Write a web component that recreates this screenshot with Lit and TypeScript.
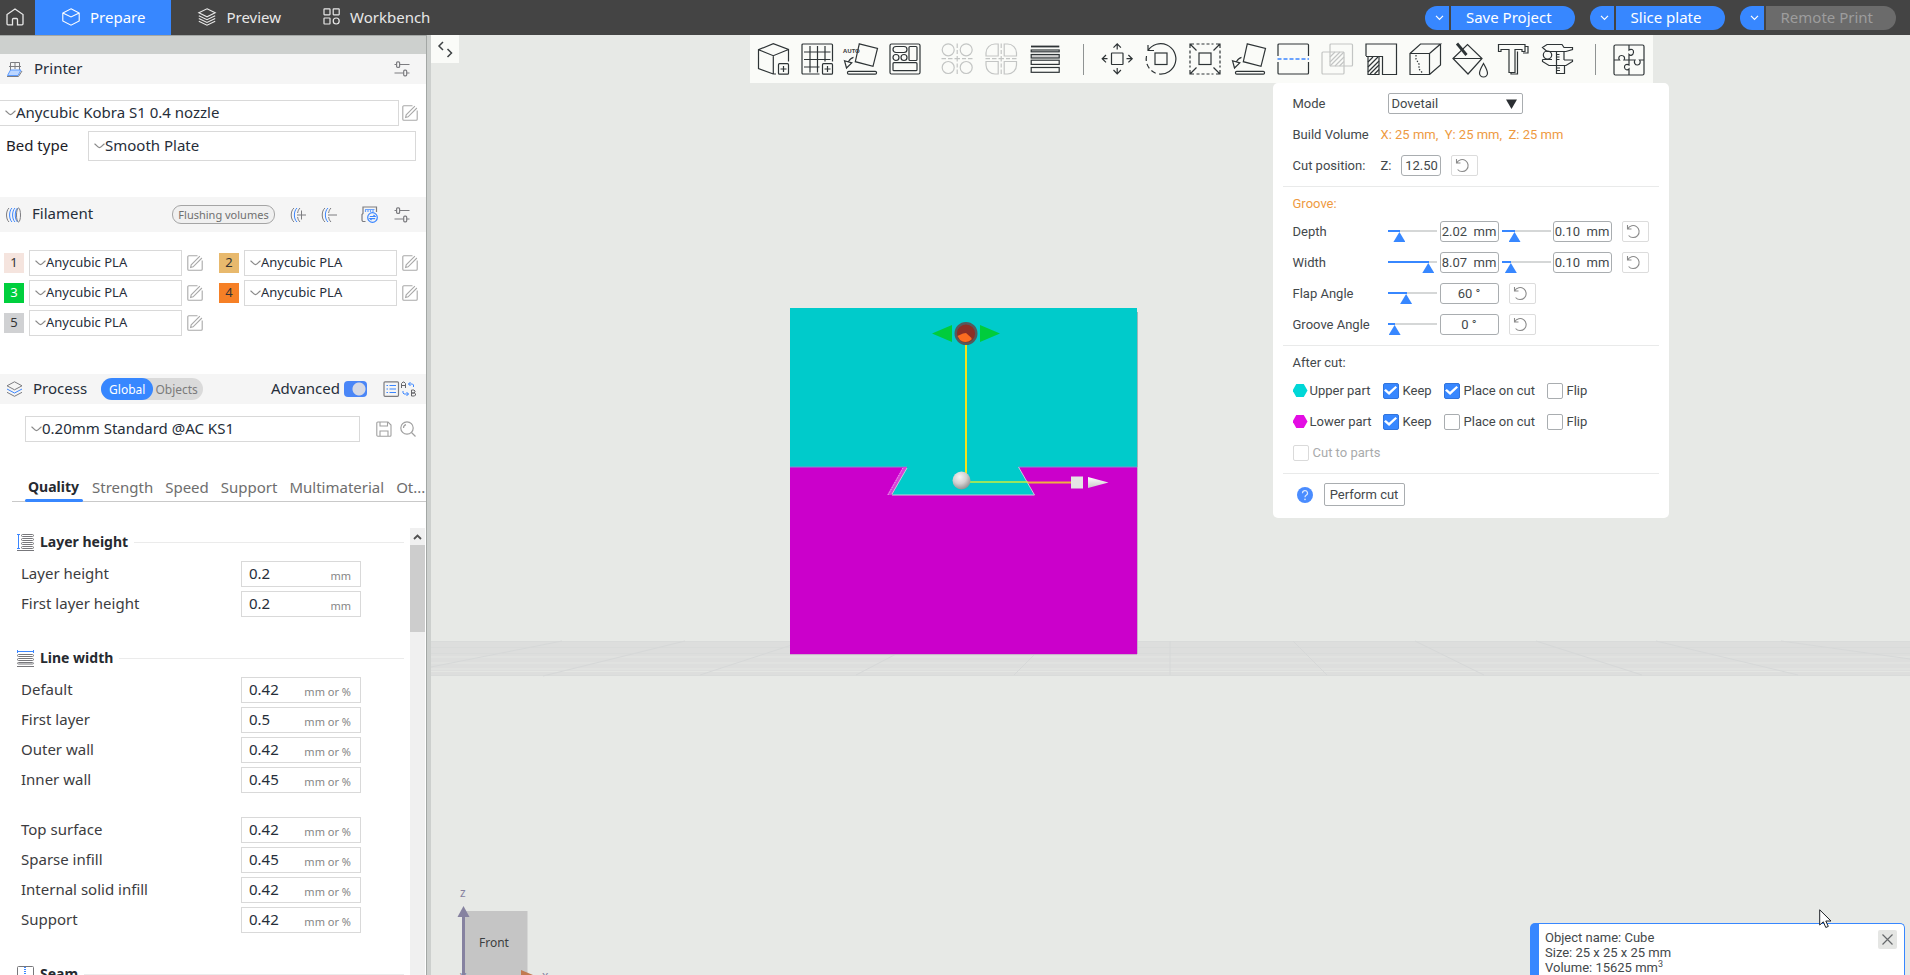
import { LitElement, html, svg, css, nothing, TemplateResult } from "lit";
import { customElement, property } from "lit/decorators.js";
import { classMap } from "lit/directives/class-map.js";
import { styleMap } from "lit/directives/style-map.js";

const CHEVRON = html`<svg class="chevron" width="11" height="6" viewBox="0 0 11 6" fill="none" stroke="#8a8a8a" stroke-width="1.2" aria-hidden="true"><path d="M.5 .8C2.6 2 3.4 4.6 5.5 4.6S8.4 2 10.500 .8" /></svg>`;

const EDIT = html`<svg width="16" height="16" viewBox="0 0 16 16" fill="none" stroke="#a9a9a9" stroke-width="1.1" aria-hidden="true">
  <path d="M10.500 .8H1.800a1 1 0 0 0-1 1V14.200a1 1 0 0 0 1 1H14.200a1 1 0 0 0 1-1V5.500" />
  <path d="M12.900 1.200 4.200 9.900l-.6 2.500 2.500-.6L14.900 3" />
</svg>`;

const SLIDERS = html`<svg width="16" height="16" viewBox="0 0 16 16" fill="none" stroke="#7c7c80" stroke-width="1.2" aria-hidden="true">
  <path d="M.5 3.500H2.500M5.500 3.500H15.500M.5 12H9.500M13 12H15.500" /><rect x="2.600" y=".8" width="3" height="5.600" rx="1" /><rect x="9.700" y="9.200" width="3" height="5.600" rx="1" />
</svg>`;

const RESET = html`<svg width="15" height="15" viewBox="0 0 15 15" fill="none" stroke="#8a8a8a" stroke-width="1.1" aria-hidden="true">
  <path d="M1.500 1v4h4M1.800 4.800A6 6 0 1 1 2.600 11.500" />
</svg>`;

const TOOL_ICONS: Record<string, TemplateResult> = {
  addCube: svg`<path d="M16.300 31 1.500 25.500V6.700L16.300 .7 31.500 6.500V18.500M1.500 6.700 16.300 12.700 31.500 6.500M16.300 12.700V31M16.300 31H19"/><rect x="21.500" y="20.700" width="10" height="10.500" rx="1"/><path d="M23.500 26H29.500M26.500 23V29"/>`,
  addPlate: svg`<path d="M18.500 31H2a1 1 0 0 1-1-1V2A1 1 0 0 1 2 1H30.500a1 1 0 0 1 1 1V18.500"/><path d="M9 3V29.500M16.500 3V29.500M24 3V18.500M3 9H29.500M3 16.500H29.500M3 24H18.500"/><rect x="21.500" y="20.700" width="10" height="10.500" rx="1"/><path d="M23.500 26H29.500M26.500 23V29"/>`,
  autoOrient: svg`<path d="M14.300 .8 32.500 5.500 28 23.300 10.300 18.700ZM-.5 17.700 6.800 19.900 1.500 25ZM8.500 14.300C6.500 14.800 4.500 16.500 3.600 18.600"/><rect x="2.500" y="28.300" width="29" height="2.800" rx="1.200"/><text x="-2" y="9.700" class="auto">AUTO</text>`,
  arrange: svg`<rect x="1" y="1" width="30" height="30" rx="1.500"/><rect x="4" y="3.500" width="14" height="6" rx="3"/><rect x="20" y="3.500" width="8" height="14" rx="1"/><circle cx="7" cy="14.500" r="3"/><circle cx="15" cy="14.500" r="3"/><rect x="4" y="19.700" width="24" height="8" rx="1"/>`,
  splitObjects: svg`<circle cx="7.200" cy="6.800" r="6"/><circle cx="25.200" cy="6.800" r="6"/><circle cx="7.200" cy="24.500" r="6"/><circle cx="25.200" cy="24.500" r="6"/><path d="M16.200 .5V5M16.200 7V11M16.200 13V18.500M16.200 20.500V24.500M16.200 26.500V31M.5 15.700H5M7 15.700H11.500M13.500 15.700H19M21 15.700H25M27 15.700H31.500"/>`,
  splitParts: svg`<path d="M13.200 1V13H1V10A9 9 0 0 1 10 1ZM19.200 1V13H31.500V10A9 9 0 0 0 22.500 1ZM13.200 31V18.500H1V22A9 9 0 0 0 10 31ZM19.200 31V18.500H31.500V22A9 9 0 0 1 22.500 31Z"/><path d="M16.200 .5V5M16.200 7V11M16.200 13V18.500M16.200 20.500V24.500M16.200 26.500V31M.5 15.700H5M7 15.700H11.500M13.500 15.700H19M21 15.700H25M27 15.700H31.500"/>`,
  layers: svg`<path d="M2 3.500H30.300" stroke-width="1.800"/><rect x="2.200" y="7" width="28" height="1.800"/><rect x="2.200" y="11.500" width="28" height="3.500" fill="#cfcfcf"/><rect x="2.200" y="17.200" width="28" height="4.200"/><rect x="2.200" y="24.500" width="28" height="4.800"/>`,
  move: svg`<rect x="10.500" y="10" width="11.500" height="11.500" rx=".5"/><path d="M16.200 1V6.500M12.500 4.700 16.200 .9 19.900 4.700M16.200 30.800V25M12.500 27 16.200 30.800 19.900 27M1.200 15.700H6.500M5 12 1.200 15.700 5 19.400M31.200 15.700H25.500M27.400 12 31.200 15.700 27.400 19.400"/>`,
  rotate: svg`<rect x="10" y="10" width="12" height="11.500"/><path d="M3 7.500A15.200 15.200 0 1 1 14 31M3 2V7.500H9"/><path d="M1.500 13A15.200 15.200 0 0 0 11.500 30.500" stroke-dasharray="5 3"/>`,
  scale: svg`<rect x="10" y="10" width="12" height="11.500"/><path d="M7.500 1H24.500M7.500 31H24.500M1 7.500V24.500M31 7.500V24.500" stroke-dasharray="3 2"/><path d="M1 5V1H5M27 1H31V5M31 27V31H27M5 31H1V27M1 1 7.500 7.500M31 1 24.500 7.500M31 31 24.500 24.500M1 31 7.500 24.500"/>`,
  layFace: svg`<path d="M14.300 .8 32.500 5.500 28 23.300 10.300 18.700ZM-.5 17.700 6.800 19.900 1.500 25ZM8.500 14.300C6.500 14.800 4.500 16.500 3.600 18.600"/><rect x="2.500" y="28.300" width="29" height="2.800" rx="1.200"/>`,
  cut: svg`<path d="M1 13V2A1 1 0 0 1 2 1H30.500A1 1 0 0 1 31.500 2V13M1 19V30A1 1 0 0 0 2 31H30.500A1 1 0 0 0 31.500 30V19"/><path d="M.5 16H32" stroke="#3b86ff" stroke-dasharray="4 2" stroke-width="1.400"/>`,
  boolean: svg`<rect x="1" y="9" width="22" height="22" rx="1"/><rect x="9" y="1" width="22.500" height="22" rx="1"/><path d="M9 14 14 9M9 19 19 9M9 23 23 9M14 23 23 14M18.500 23 23 18.500"/>`,
  support: svg`<path d="M1 13V1H31.500V31.500H17.500V13.500H1M3 14V31.500H14V14"/><path d="M3 19 8 14M3 24 13 14M3 29 14 18M5 31 14 22M9.500 31 14 26.500"/>`,
  seam: svg`<path d="M1 10.500H20.500V31.500H1ZM1 10.500 11.500 1H31.500L20.500 10.500M31.500 1V22L20.500 31.500"/><path d="M7 12V16L10 21V26L14 30.500" stroke-dasharray="1.500 1.500"/>`,
  paint: svg`<path d="M0 15.500 14.500 1.500 29 15.500 15 31ZM0 15.500H29"/><path d="M4 .5 13.500 12" stroke-width="2.800"/><path d="M30.500 20.500C28.500 24 26.500 27.500 26.500 30A4 4 0 0 0 34.500 30C34.500 27.500 32.500 24 30.500 20.500Z"/>`,
  text: svg`<path d="M1.500 1.500H28V8.500H25V6.500H18V29.500H12V6.500H4V8.500H1.500Z"/><path d="M28 3.500H31V10H26M20.500 8.500V31H14V29.500"/>`,
  measure: svg`<path d="M1.500 4.500 6 1.500H21L23 4.500H31.500V6.500L25 8.500H6ZM1.500 16.500V18.500L8 22.500H25L31.500 18.500V17H23M1.500 16.500H11M23 8.500V17M15.500 22.500V30.500H23.500V22.500M15.500 8.500V22"/><ellipse cx="6.500" cy="12" rx="4.200" ry="4"/><path d="M15.500 11.500H18.500M15.500 14H18.500M15.500 16.500H18.500M15.500 25H19M15.500 27.500H19"/>`,
  assembly: svg`<rect x="1" y="2" width="30" height="30" rx="1.500"/><path d="M16 2V7C18 5.500 21 6.500 20.500 9.500S17.500 13 16 11.500V17H11C12.500 14.500 11 12.500 8.500 12.500S5 15 6.500 17H1M16 17H22C20.500 19.500 22 22 24.500 22S28 19 26.500 17H31M16 17V22C13.500 20.500 11 22 11.500 24.500S14.500 27.500 16 26V32"/>`,
};

interface Tool { id: string; label: string; off?: boolean; gap?: boolean; sep?: boolean }

const TOOLS: Tool[] = [
  { id: "addCube", label: "Add" },
  { id: "addPlate", label: "Add plate" },
  { id: "autoOrient", label: "Auto orient" },
  { id: "arrange", label: "Arrange" },
  { id: "splitObjects", label: "Split to objects", off: true, gap: true },
  { id: "splitParts", label: "Split to parts", off: true },
  { id: "layers", label: "Variable layer height" },
  { id: "move", label: "Move", sep: true },
  { id: "rotate", label: "Rotate" },
  { id: "scale", label: "Scale" },
  { id: "layFace", label: "Lay on face" },
  { id: "cut", label: "Cut" },
  { id: "boolean", label: "Mesh boolean", off: true },
  { id: "support", label: "Support painting" },
  { id: "seam", label: "Seam painting" },
  { id: "paint", label: "Color painting" },
  { id: "text", label: "Text" },
  { id: "measure", label: "Measure" },
  { id: "assembly", label: "Assembly view", sep: true },
];

const sharedStyles = css`
  :host, * { box-sizing: border-box; }
  button, input, select { font: inherit; color: inherit; margin: 0; }
  button { background: none; border: 0; padding: 0; display: inline-flex; align-items: center; justify-content: center; }
  select { appearance: none; background: transparent; border: 0; padding: 0; min-width: 0; flex: 1; outline: 0; }
  svg { display: block; flex: none; overflow: visible; }
  input { outline: 0; min-width: 0; }
`;

@customElement("top-bar")
export class TopBar extends LitElement {
  static styles = [sharedStyles, css`
    :host { display: flex; align-items: stretch; height: 35px; background: #444444; color: #e8e8e8; font-size: 15px; }
    .home { width: 35px; padding: 0 6px 2px 0; }
    nav { display: flex; flex: 1; }
    .tab { gap: 10px; padding: 0 26px 2px 27px; }
    .tab:last-child { padding-left: 16px; }
    .tab.on { background: #3787ff; color: #fff; }
    .actions { display: flex; align-items: center; gap: 15px; padding-right: 14px; }
    .split { display: flex; gap: 2px; height: 24px; color: #fff; }
    .split button { background: #3787ff; }
    .drop { width: 24px; border-radius: 12px 0 0 12px; padding-left: 5px; }
    .main { border-radius: 0 12px 12px 0; padding: 0 23px 2px 15px; }
    .split .main.off { background: #6b6b6b; color: #9d9d9d; }
  `];

  private split(label: string, off = false) {
    return html`<div class="split">
      <button class="drop" aria-label="${label} options"><svg width="9" height="6" viewBox="0 0 9 6" fill="none" stroke="#fff" stroke-width="1.200"><path d="M1 .8 4.500 4.300 8 .8"/></svg></button>
      <button class=${classMap({ main: true, off })} ?disabled=${off}>${label}</button>
    </div>`;
  }

  render() {
    return html`
      <button class="home" aria-label="Home"><svg width="18" height="18" viewBox="0 0 18 18" fill="none" stroke="#e8e8e8" stroke-width="1.300"><path d="M6.500 16.800H2A1 1 0 0 1 1 15.800V6.500L9 1 17 6.500V15.800A1 1 0 0 1 16 16.800H11.500V11.500A1 1 0 0 0 10.500 10.500H7.500A1 1 0 0 0 6.500 11.500Z"/></svg></button>
      <nav>
        <button class="tab on"><svg width="18" height="18" viewBox="0 0 18 18" fill="none" stroke="#fff" stroke-width="1.100"><path d="M9 .8 17.200 5V13L9 17.200.8 13V5ZM.8 5 9 9 17.200 5"/></svg>Prepare</button>
        <button class="tab"><svg width="18" height="18" viewBox="0 0 18 18" fill="none" stroke="#e8e8e8" stroke-width="1.100"><path d="M9 .8 17.200 4.800 9 8.800.8 4.800ZM.8 7.700 9 11.700 17.200 7.700M.8 10.400 9 14.400 17.200 10.400M.8 13.200 9 17.200 17.200 13.200"/></svg>Preview</button>
        <button class="tab"><svg width="17" height="17" viewBox="0 0 17 17" fill="none" stroke="#e8e8e8" stroke-width="1.200"><rect x="1" y=".8" width="6" height="6" rx=".5"/><rect x="10.200" y=".8" width="6" height="6" rx=".5"/><rect x="1" y="10" width="6" height="6" rx=".5"/><circle cx="13.200" cy="13" r="3"/></svg>Workbench</button>
      </nav>
      <div class="actions">${this.split("Save Project")}${this.split("Slice plate")}${this.split("Remote Print", true)}</div>
    `;
  }
}

interface Filament { n: number; bg: string; fg: string }
const FILAMENTS: Filament[] = [
  { n: 1, bg: "#f5e4de", fg: "#333333" },
  { n: 2, bg: "#e8b96d", fg: "#333333" },
  { n: 3, bg: "#00cf3d", fg: "#ffffff" },
  { n: 4, bg: "#f68026", fg: "#333333" },
  { n: 5, bg: "#d0d1d3", fg: "#333333" },
];

interface Group { title: string; icon: TemplateResult; blocks: [string, string, string][][] }
const W = "mm or %";
const GROUPS: Group[] = [
  {
    title: "Layer height",
    icon: html`<svg width="17" height="17" viewBox="0 0 17 17" fill="none" stroke="#77777b"><path d="M1.500 1V14.500M0 .5H3M0 14.500H3" stroke="#3b86ff"/><rect x="4.500" y=".5" width="12" height="2" rx="1"/><rect x="4.500" y="4.500" width="12" height="2" rx="1"/><rect x="4.500" y="8.500" width="12" height="2" rx="1"/><rect x="4.500" y="12.500" width="12" height="2" rx="1"/><path d="M0 16.500H17"/></svg>`,
    blocks: [[["Layer height", "0.2", "mm"], ["First layer height", "0.2", "mm"]]],
  },
  {
    title: "Line width",
    icon: html`<svg width="17" height="17" viewBox="0 0 17 17" fill="none" stroke="#77777b"><path d="M.5 1.500H16.500M.5 0V3M16.500 0V3" stroke="#3b86ff"/><rect x=".5" y="4.500" width="16" height="2" rx="1"/><rect x=".5" y="8.500" width="16" height="2" rx="1"/><rect x=".5" y="12.500" width="16" height="1.500" rx="1"/><path d="M0 16.500H17"/></svg>`,
    blocks: [
      [["Default", "0.42", W], ["First layer", "0.5", W], ["Outer wall", "0.42", W], ["Inner wall", "0.45", W]],
      [["Top surface", "0.42", W], ["Sparse infill", "0.45", W], ["Internal solid infill", "0.42", W], ["Support", "0.42", W]],
    ],
  },
  {
    title: "Seam",
    icon: html`<svg width="17" height="17" viewBox="0 0 17 17" fill="none" stroke="#77777b"><rect x=".5" y=".5" width="16" height="16" rx="1"/><path d="M8 1V16" stroke="#3b86ff" stroke-width="2" stroke-dasharray="1 1"/></svg>`,
    blocks: [],
  },
];

@customElement("side-panel")
export class SidePanel extends LitElement {
  static styles = [sharedStyles, css`
    :host { display: flex; flex-direction: column; width: 431px; flex: none; min-height: 0; background: #fff; border-right: 4px solid #cdd0ce; font-size: 15px; color: #262e3a; position: relative; }
    :host::after { content: ""; position: absolute; top: 0; right: 0; bottom: 0; width: 1px; background: #a3a7a5; }
    .strip { height: 19px; background: #cdd0ce; border-top: 1px solid #a3a7a5; flex: none; }
    header { display: flex; align-items: center; background: #f5f5f5; height: 30px; padding: 0 17px 0 6px; flex: none; }
    header.tall { height: 35px; }
    header.process { padding-right: 10px; }
    header h2 { font: inherit; margin: 0 0 0 10px; padding-bottom: 3px; flex: 1; }
    .box { display: flex; align-items: center; border: 1px solid #d9d9d9; height: 26px; padding-left: 5px; background: #fff; }
    .box select { height: 24px; padding-bottom: 2px; }
    .printer { display: flex; align-items: center; gap: 3px; margin: 16px 9px 0 -1px; }
    .printer .box { flex: 1; }
    .bed { display: flex; align-items: center; margin: 5px 11px 36px 6px; }
    .bed label { width: 82px; color: #1c2027; padding-bottom: 2px; }
    .bed .box { flex: 1; height: 30px; }
    .flush { height: 19px; border: 1px solid #a5a5a5; border-radius: 9px; font-size: 11px; color: #6f6f6f; width: 103px; margin-right: 15px; background: #f0f0f0; }
    .fadd { margin-right: 15px; }
    .fdel { margin-right: 24px; }
    .fsync { margin-right: 16px; }
    .filaments { display: grid; grid-template-columns: 1fr 1fr; gap: 4px 16px; padding: 18px 9px 38px 4px; font-size: 13px; }
    .fil { display: flex; align-items: center; gap: 5px; }
    .fil .box { flex: 1; min-width: 0; }
    .swatch { width: 20px; height: 20px; display: grid; place-items: center; font-size: 13px; padding-bottom: 2px; }
    .seg { display: flex; height: 22px; border-radius: 11px; background: #dadada; font-size: 12px; color: #7b7b7b; margin: 0 auto 0 14px; }
    .seg button { padding: 0 5px 0 2px; }
    .seg .on { background: #3787ff; color: #fff; border-radius: 11px; padding: 0 8px; }
    header h2.fit { flex: none; }
    .adv { display: flex; align-items: center; gap: 4px; margin-right: 16px; }
    .adv label { padding-bottom: 3px; }
    .adv input { appearance: none; width: 23px; height: 16px; border-radius: 4px; background: radial-gradient(circle at 15px 8px, #d6d9e4 6px, #4a86f7 7px); }
    .preset { display: flex; align-items: center; margin: 12px 11px 0 25px; gap: 8px; }
    .preset .box { flex: 1; margin-right: 8px; }
    .tabs { display: flex; gap: 12px; margin: 33px 0 0 12px; padding-left: 16px; border-bottom: 1px solid #c9c9c9; height: 27px; color: #6e6e6e; flex: none; }
    .tabs button { align-items: flex-start; position: relative; height: 26px; line-height: 24px; }
    .tabs .on { font-weight: 700; font-size: 14px; color: #262a30; margin-right: 1px; }
    .tabs .on::after { content: ""; position: absolute; left: -3px; right: -4px; bottom: -1px; height: 3px; border-radius: 2px; background: #3787ff; }
    .scroll { display: flex; flex: 1; min-height: 0; margin-top: 26px; overflow: hidden; }
    .list { flex: 1; padding: 2px 6px 0 17px; }
    .bar { display: flex; flex-direction: column; width: 15px; margin-right: 2px; background: #f0f0f0; flex: none; }
    .bar button { height: 17px; }
    .thumb { height: 87px; background: #cdcdcd; }
    .group { margin-bottom: 29px; }
    .group h3 { display: flex; align-items: center; gap: 6px; height: 24px; margin: 0 0 7px; font-size: 14px; font-weight: 700; color: #262a30; }
    .group h3 span { padding-bottom: 2px; }
    .group h3::after { content: ""; flex: 1; height: 1px; background: #ebebeb; }
    .block + .block { margin-top: 24px; }
    .row { display: flex; align-items: center; height: 26px; margin-bottom: 4px; padding-left: 4px; }
    .row:last-child { margin-bottom: 0; }
    .row label { width: 220px; color: #3c3c40; padding-bottom: 2px; }
    .field { display: flex; align-items: center; width: 120px; height: 26px; border: 1px solid #d9d9d9; padding: 0 9px 0 7px; }
    .field input { border: 0; background: transparent; padding: 0 0 2px; flex: 1; width: 40px; }
    .field span { font-size: 11px; color: #858585; padding-top: 2px; }
  `];

  private select(label: string, value: string, id = "") {
    return html`<div class="box">${CHEVRON}<select id=${id || nothing} aria-label=${label}><option>${value}</option></select></div>`;
  }

  render() {
    return html`
      <div class="strip"></div>
      <header>
        <svg width="18" height="16" viewBox="0 0 18 16" fill="none" stroke="#7c7c80"><path d="M4.500 11V1.500H13.500V9M3 5.500H15M9 2V8"/><path d="M4.500 9H15L12 14.500H1.500Z" stroke="#5c9bff" fill="#bcd6ff"/><path d="M1 15.500H12.500L16 10"/></svg>
        <h2>Printer</h2>
        <button aria-label="Printer settings">${SLIDERS}</button>
      </header>
      <div class="printer">${this.select("Printer preset", "Anycubic Kobra S1 0.4 nozzle")}<button aria-label="Edit printer">${EDIT}</button></div>
      <div class="bed"><label for="bed">Bed type</label>${this.select("Bed type", "Smooth Plate", "bed")}</div>

      <header class="tall">
        <svg width="16" height="16" viewBox="0 0 16 16" fill="none" stroke="#7c7c80"><path d="M3 1C-.3 4-.3 12 3 15"/><path d="M6 1C2.800 4 2.800 12 6 15M9 1C5.800 4 5.800 12 9 15M11.500 1C8.500 4 8.500 12 11.500 15" stroke="#3b86ff"/><ellipse cx="12.500" cy="8" rx="2" ry="7"/></svg>
        <h2>Filament</h2>
        <button class="flush">Flushing volumes</button>
        <button class="fadd" aria-label="Add filament"><svg width="16" height="16" viewBox="0 0 16 16" fill="none" stroke="#7c7c80"><path d="M4 1C.300 4 .300 12 4 15"/><path d="M7 1C3.500 4 3.500 12 7 15" stroke="#3b86ff"/><path d="M10 1C8.500 2.500 8 4 7.600 6M7.600 10C8 12 8.500 13.500 10 15M7 8H16M11.500 3.500V12.500"/></svg></button>
        <button class="fdel" aria-label="Remove filament"><svg width="16" height="16" viewBox="0 0 16 16" fill="none" stroke="#7c7c80"><path d="M4 1C.300 4 .300 12 4 15"/><path d="M7 1C3.500 4 3.500 12 7 15" stroke="#3b86ff"/><path d="M10 1C8.500 2.500 8 4 7.600 6M7.600 10C8 12 8.500 13.500 10 15M7 8H16"/></svg></button>
        <button class="fsync" aria-label="Sync filaments"><svg width="17" height="17" viewBox="0 0 17 17" fill="none" stroke="#7c7c80" stroke-width="1.200"><path d="M4.500 15.500H2.500A1.500 1.500 0 0 1 1 14V8.500L2 7.500V1H15.500V6"/><path d="M4 3.500H13.500M4.500 4V6M7 4V6M9.500 4V6M12 4V6" stroke="#6ba4ff"/><circle cx="11.500" cy="11.500" r="4.800" stroke="#3b86ff"/><path d="M8.800 10.500H14L12.500 9M14.200 12.700H9L10.500 14.200" stroke="#3b86ff"/></svg></button>
        <button aria-label="Filament settings">${SLIDERS}</button>
      </header>
      <div class="filaments">
        ${FILAMENTS.map((f) => html`<div class="fil">
          <span class="swatch" style=${styleMap({ background: f.bg, color: f.fg })}>${f.n}</span>
          ${this.select(`Filament ${f.n}`, "Anycubic PLA")}
          <button aria-label="Edit filament ${f.n}">${EDIT}</button>
        </div>`)}
      </div>

      <header class="process">
        <svg width="17" height="16" viewBox="0 0 17 16" fill="none" stroke="#7c7c80"><path d="M8.500 .8 16 4.800 8.500 8.800 1 4.800ZM1 11.300 8.500 15.300 16 11.300"/><path d="M1 8 8.500 12 16 8" stroke="#3b86ff"/></svg>
        <h2 class="fit">Process</h2>
        <div class="seg"><button class="on">Global</button><button>Objects</button></div>
        <div class="adv"><label for="adv">Advanced</label><input id="adv" type="checkbox" role="switch" checked /></div>
        <button aria-label="Parameter list"><svg width="17" height="16" viewBox="0 0 17 16" fill="none" stroke="#7c7c80" stroke-width="1.200"><rect x="1" y=".8" width="14.500" height="14.500" rx="1"/><path d="M3.500 4.500H5M6.500 4.500H13M3.500 8H5M6.500 8H13M3.500 11.500H5M6.500 11.500H13" stroke="#3b86ff"/></svg></button>
        <button aria-label="Compare presets"><svg width="17" height="16" viewBox="0 0 17 16" fill="none" stroke="#66666a"><path d="M1.500 7V2.500L3 1H4L5.500 2.500V7M1.500 4.500H5.500M11.500 9V15H14.500L15.500 14V13L14.500 12H11.500H14L15 11V10L14 9Z"/><path d="M8.500 3H12.500L13.500 4V6M10.500 1 8.500 3 10.500 5M3 10V12L4 13H8.500M6.500 11 8.500 13 6.500 15" stroke="#3b86ff"/></svg></button>
      </header>
      <div class="preset">
        ${this.select("Process preset", "0.20mm Standard @AC KS1")}
        <button aria-label="Save preset"><svg width="16" height="16" viewBox="0 0 16 16" fill="none" stroke="#a0a0a0" stroke-width="1.100"><path d="M1.800 1H12L15 4V14.200A1 1 0 0 1 14 15.200H1.800A1 1 0 0 1 .8 14.200V2A1 1 0 0 1 1.800 1ZM4 1V5H11.500V1M4 15V10H12V15"/></svg></button>
        <button aria-label="Search"><svg width="16" height="16" viewBox="0 0 16 16" fill="none" stroke="#a0a0a0" stroke-width="1.200"><circle cx="7" cy="7" r="6.200"/><path d="M11.500 11.500 15.500 15.500M3.500 7A3.500 3.500 0 0 1 6 3.600"/></svg></button>
      </div>
      <div class="tabs" role="tablist">
        <button role="tab" class="on">Quality</button><button role="tab">Strength</button><button role="tab">Speed</button><button role="tab">Support</button><button role="tab">Multimaterial</button><button role="tab">Ot...</button>
      </div>
      <div class="scroll">
        <div class="list">
          ${GROUPS.map((g, gi) => html`<section class="group">
            <h3>${g.icon}<span>${g.title}</span></h3>
            ${g.blocks.map((b, bi) => html`<div class="block">${b.map(([label, value, unit], i) => {
              const id = `p${gi}-${bi}-${i}`;
              return html`<div class="row"><label for=${id}>${label}</label><div class="field"><input id=${id} .value=${value} /><span>${unit}</span></div></div>`;
            })}</div>`)}
          </section>`)}
        </div>
        <div class="bar">
          <button aria-label="Scroll up"><svg width="9" height="6" viewBox="0 0 9 6" fill="none" stroke="#505050" stroke-width="1.800"><path d="M1 5 4.500 1.500 8 5"/></svg></button>
          <div class="thumb"></div>
        </div>
      </div>
    `;
  }
}

@customElement("cut-panel")
export class CutPanel extends LitElement {
  static styles = [sharedStyles, css`
    :host { display: block; width: 396px; background: #fff; border-radius: 5px; padding: 5px 10px 8px; font-family: Roboto, "Noto Sans", sans-serif; font-size: 13px; color: #43484b; }
    .row { display: flex; align-items: center; height: 31px; padding-left: 10px; }
    .row.title { height: 24px; padding-bottom: 2px; }
    hr { border: 0; height: 1px; background: #e9eaea; margin: 5px 0; }
    .k { width: 95px; }
    .k.near { width: 88px; }
    .warm { color: #ee9a3f; }
    .pick { display: flex; align-items: center; width: 135px; height: 21px; border: 1px solid #a9adb0; border-radius: 2px; padding: 0 5px 0 3px; }
    .num { height: 21px; width: 59px; border: 1px solid #a9adb0; border-radius: 3px; text-align: center; padding: 0; background: #fff; }
    .num.z { width: 40px; margin-left: 10px; }
    .reset { width: 27px; height: 21px; border: 1px solid #dcdcdc; border-radius: 2px; margin-left: 10px; padding-right: 4px; }
    input[type="range"] { appearance: none; width: 49px; height: 21px; margin-right: 3px; background: linear-gradient(to right, #3787ff var(--fill), #d5d7d7 var(--fill)) 0 9px / 100% 2px no-repeat; }
    .num + input[type="range"] { margin: 0 2px 0 3px; }
    input[type="range"]::-webkit-slider-runnable-track { height: 21px; }
    input[type="range"]::-webkit-slider-thumb { appearance: none; width: 12px; height: 10px; margin-top: 11px; background: #3787ff; clip-path: polygon(50% 0, 100% 100%, 0 100%); }
    .checks { display: grid; grid-template-columns: 90px 61px 103px 1fr; align-items: center; }
    .part { display: flex; align-items: center; gap: 2px; }
    .hex { width: 15px; height: 13px; clip-path: polygon(25% 0, 75% 0, 100% 50%, 75% 100%, 25% 100%, 0 50%); }
    .upper .hex { background: #00d7d7; }
    .lower .hex { background: #e30de3; }
    .check { display: flex; align-items: center; gap: 4px; }
    .check input { appearance: none; width: 16px; height: 16px; border: 1px solid #a9adb0; border-radius: 2px; display: grid; place-items: center; }
    .check input:checked { background: #3787ff; border-color: #3174dc; }
    .check input:checked::before { content: ""; width: 13px; height: 10px; background: #fff; clip-path: polygon(0 50%, 14% 36%, 38% 62%, 88% 6%, 100% 20%, 39% 94%); }
    .check.off { color: #a9abac; }
    .check.off input { border-color: #dadada; }
    .help { margin: 0 11px 0 4px; }
    .go { width: 81px; height: 23px; border: 1px solid #a9adb0; border-radius: 2px; }
  `];

  private range(label: string, v: number) {
    return html`<input type="range" aria-label=${label} min="0" max="100" .value=${String(v)} style=${styleMap({ "--fill": `${Math.round(6 + (v * 37) / 100)}px` })} />`;
  }
  private reset = html`<button class="reset" aria-label="Reset">${RESET}</button>`;

  private pair(label: string, a: number, av: string, b: number, bv: string) {
    return html`<div class="row"><span class="k">${label}</span>${this.range(label, a)}<input class="num" aria-label=${label} .value=${av} />${this.range(`${label} tolerance`, b)}<input class="num" aria-label="${label} tolerance" .value=${bv} />${this.reset}</div>`;
  }
  private single(label: string, a: number, av: string) {
    return html`<div class="row"><span class="k">${label}</span>${this.range(label, a)}<input class="num" aria-label=${label} .value=${av} />${this.reset}</div>`;
  }
  private check(label: string, checked: boolean, off = false) {
    return html`<label class=${classMap({ check: true, off })}><input type="checkbox" ?checked=${checked} ?disabled=${off} />${label}</label>`;
  }

  render() {
    return html`
      <div class="row"><label class="k" for="mode">Mode</label><div class="pick"><select id="mode"><option>Dovetail</option></select><svg width="11" height="10" viewBox="0 0 11 10" fill="#2b2f33"><path d="M0 .5H11L5.500 10Z"/></svg></div></div>
      <div class="row"><span class="k near">Build Volume</span><span class="warm">X: 25 mm,&nbsp; Y: 25 mm,&nbsp; Z: 25 mm</span></div>
      <div class="row"><span class="k near">Cut position:</span><label for="z">Z:</label><input id="z" class="num z" .value=${"12.50"} />${this.reset}</div>
      <hr />
      <div class="row title warm">Groove:</div>
      ${this.pair("Depth", 16, "2.02  mm", 19, "0.10  mm")}
      ${this.pair("Width", 94, "8.07  mm", 9, "0.10  mm")}
      ${this.single("Flap Angle", 34, "60 °")}
      ${this.single("Groove Angle", 3, "0 °")}
      <hr />
      <div class="row title">After cut:</div>
      <div class="row checks upper"><span class="part"><i class="hex"></i>Upper part</span>${this.check("Keep", true)}${this.check("Place on cut", true)}${this.check("Flip", false)}</div>
      <div class="row checks lower"><span class="part"><i class="hex"></i>Lower part</span>${this.check("Keep", true)}${this.check("Place on cut", false)}${this.check("Flip", false)}</div>
      <div class="row">${this.check("Cut to parts", false, true)}</div>
      <hr />
      <div class="row"><button class="help" aria-label="Help"><svg width="16" height="16" viewBox="0 0 16 16"><circle cx="8" cy="8" r="8" fill="#4a8cff"/><path d="M5.500 6.200A2.500 2.500 0 1 1 9.200 8.300C8.400 8.800 8 9.200 8 10.300" fill="none" stroke="#dbe8ff" stroke-width="1.200"/><circle cx="8" cy="12.400" r=".8" fill="#dbe8ff"/></svg></button><button class="go">Perform cut</button></div>
    `;
  }
}

@customElement("plate-view")
export class PlateView extends LitElement {
  @property() active = "cut";

  static styles = [sharedStyles, css`
    :host { display: block; position: relative; flex: 1; min-width: 0; overflow: hidden; background: #e7e9e6; }
    .head { display: grid; grid-template-columns: 28px 290fr auto 257fr; align-items: start; position: relative; }
    .fold { width: 28px; height: 28px; background: #fafbf8; }
    .tools { grid-column: 3; display: flex; align-items: center; gap: 12px; height: 48px; padding: 0 8px 0 7px; background: #fafbf8; position: relative; }
    .tools svg { width: 32px; height: 32px; fill: none; stroke: #2e3436; stroke-width: 1.2; }
    .tools .off svg { stroke: #c3c5c4; }
    .tools .gap { margin-left: 8px; }
    .tools .auto { font-size: 6px; font-weight: 700; fill: #444; stroke: none; }
    .sep { width: 1px; height: 31px; background: #8f9393; margin: 0 5px 0 10px; }
    cut-panel { position: absolute; top: 100%; right: -16px; }
    .bed { position: absolute; left: 0; top: 606px; width: 100%; height: 35px; }
    .model { position: absolute; left: 359px; top: 273px; }
    .axes { position: absolute; left: 20px; bottom: 0; }
    .axes text { font-size: 12px; fill: #3c3f41; }
    .axes .z { fill: #8682a0; }
    .info { position: absolute; right: 5px; bottom: 0; width: 375px; height: 52px; border: 1px solid #3787ff; border-width: 1px 1px 0 9px; border-radius: 5px 5px 0 0; background: #fff; padding: 6px 7px 0 6px; display: flex; align-items: flex-start; font: 13px/15px Roboto, "Noto Sans", sans-serif; color: #43484b; }
    .info div { flex: 1; }
    .info sup { font-size: 9px; line-height: 0; }
    .info button { width: 19px; height: 19px; background: #e5e6e4; border-radius: 2px; }
    .pointer { position: absolute; right: 78px; bottom: 46px; }
  `];

  render() {
    return html`
      <svg class="bed" viewBox="0 0 1479 35" preserveAspectRatio="none" fill="none">
        <rect width="1479" height="35" fill="#dddedd"/>
        <path d="M0 16H1479M0 22H1479M0 28H1479M0 30.500H1479" stroke="#e4e6e3"/>
        <path d="M0 .5H1479M0 34.500H1479M0 6.500H1479M0 12.500H1479" stroke="#d9dbda"/>
        <path d="M131 0 0 26M254 0 112 35M373 0 269 34M490 0 425 34M617 0 583 34M739 0V34M862 0 896 34M984 0 1053 34M1105 0 1211 34M1225 0 1367 34M1350 0 1479 18" stroke="#d6d8d8"/>
      </svg>
      <svg class="model" width="348" height="348" viewBox="0 0 348 348">
        <defs>
          <radialGradient id="ball" cx="40%" cy="30%" r="75%"><stop offset="0" stop-color="#f4f4f4"/><stop offset=".5" stop-color="#d2d2d2"/><stop offset="1" stop-color="#8a8a8a"/></radialGradient>
          <linearGradient id="cone" x2="0" y2="1"><stop offset="0" stop-color="#fff"/><stop offset="1" stop-color="#c9c9c9"/></linearGradient>
        </defs>
        <rect width="347" height="346" fill="#cb00cb"/>
        <path d="M0 0H347V159H228.500L244 187H102L117 159H0Z" fill="#00cbcb"/>
        <path d="M0 159H117M228.500 159H347" stroke="#7f8fd0"/>
        <path d="M117 159H113L97 187H102Z" fill="#d93fd9"/>
        <path d="M113 160 98 187" stroke="#f0b0f0" stroke-dasharray="1 1" fill="none"/>
        <path d="M102 187H244.500L228.500 159M117 160 102 186" stroke="#c6cfd6" fill="none"/>
        <path d="M347.500 4V346M0 346.500H347" stroke="#c9b0cc"/>
        <path d="M347.500 4V159" stroke="#9bb7b7"/>
        <path d="M176 36V168" stroke="#f2e21c" stroke-width="2"/>
        <path d="M180 174H238" stroke="#c8ee3c" stroke-width="1.500"/><path d="M238 174.500H282" stroke="#f0b040" stroke-width="2"/>
        <path d="M142 25.500 162 17V34ZM210 25.500 190 17V34Z" fill="#00cc3c"/>
        <circle cx="176" cy="25.500" r="10.300" fill="#8c2f25" stroke="#555a5c" stroke-width="2.400"/>
        <path d="M167.500 28 173 25.500 176 25 181.500 30V31.500A8.500 8.500 0 0 1 170 32Z" fill="#fb6c20"/>
        <circle cx="171.500" cy="172.500" r="9" fill="url(#ball)"/>
        <rect x="281" y="168.500" width="12" height="12" fill="#e4e4e4"/>
        <path d="M298 169 318.500 174.500 298 180Z" fill="url(#cone)"/>
      </svg>
      <svg class="axes" width="110" height="90" viewBox="0 0 110 90">
        <rect x="14" y="26" width="62.500" height="64" fill="#c5c5c5"/>
        <path d="M12.500 90V30" stroke="#8682a0" stroke-width="3"/><path d="M12.500 21 18.500 32H6.500Z" fill="#8682a0"/>
        <text x="9" y="12" class="z">z</text><text x="28" y="62">Front</text>
        <text x="9" y="95" class="z">y</text><text x="91" y="95" class="z">x</text>
        <path d="M70 85 82 90H70Z" fill="#c17a51"/>
      </svg>
      <div class="head">
        <button class="fold" aria-label="Collapse sidebar"><svg width="15" height="17" viewBox="0 0 15 17" fill="none" stroke="#3e4244" stroke-width="1.500"><path d="M5 1 1 5 5 9M9.500 8 13.500 12 9.500 16"/></svg></button>
        <div class="tools" role="toolbar">
          ${TOOLS.map((t) => html`${t.sep ? html`<span class="sep"></span>` : nothing}<button class=${classMap({ off: !!t.off, gap: !!t.gap })} aria-label=${t.label} aria-pressed=${t.id === this.active} ?disabled=${!!t.off}><svg viewBox="0 0 32 32">${TOOL_ICONS[t.id]}</svg></button>`)}
          <cut-panel></cut-panel>
        </div>
      </div>
      <aside class="info">
        <div>Object name: Cube<br />Size: 25 x 25 x 25 mm<br />Volume: 15625 mm<sup>3</sup></div>
        <button aria-label="Close"><svg width="11" height="11" viewBox="0 0 11 11" stroke="#66696b" stroke-width="1.200"><path d="M.5 .5 10.500 10.500M10.500 .5 .5 10.500"/></svg></button>
      </aside>
      <svg class="pointer" width="13" height="20" viewBox="0 0 13 20" fill="#fff" stroke="#1f2328"><path d="M.7 .8V16L4.300 12.800 6.800 18.500 9.300 17.400 6.800 12H12Z"/></svg>
    `;
  }
}

@customElement("app-root")
export class AppRoot extends LitElement {
  static styles = css`
    :host { display: flex; flex-direction: column; height: 100vh; overflow: hidden; font-family: "Noto Sans", "Open Sans", sans-serif; }
    main { display: flex; flex: 1; min-height: 0; }
  `;
  render() {
    return html`<top-bar></top-bar><main><side-panel></side-panel><plate-view></plate-view></main>`;
  }
}
